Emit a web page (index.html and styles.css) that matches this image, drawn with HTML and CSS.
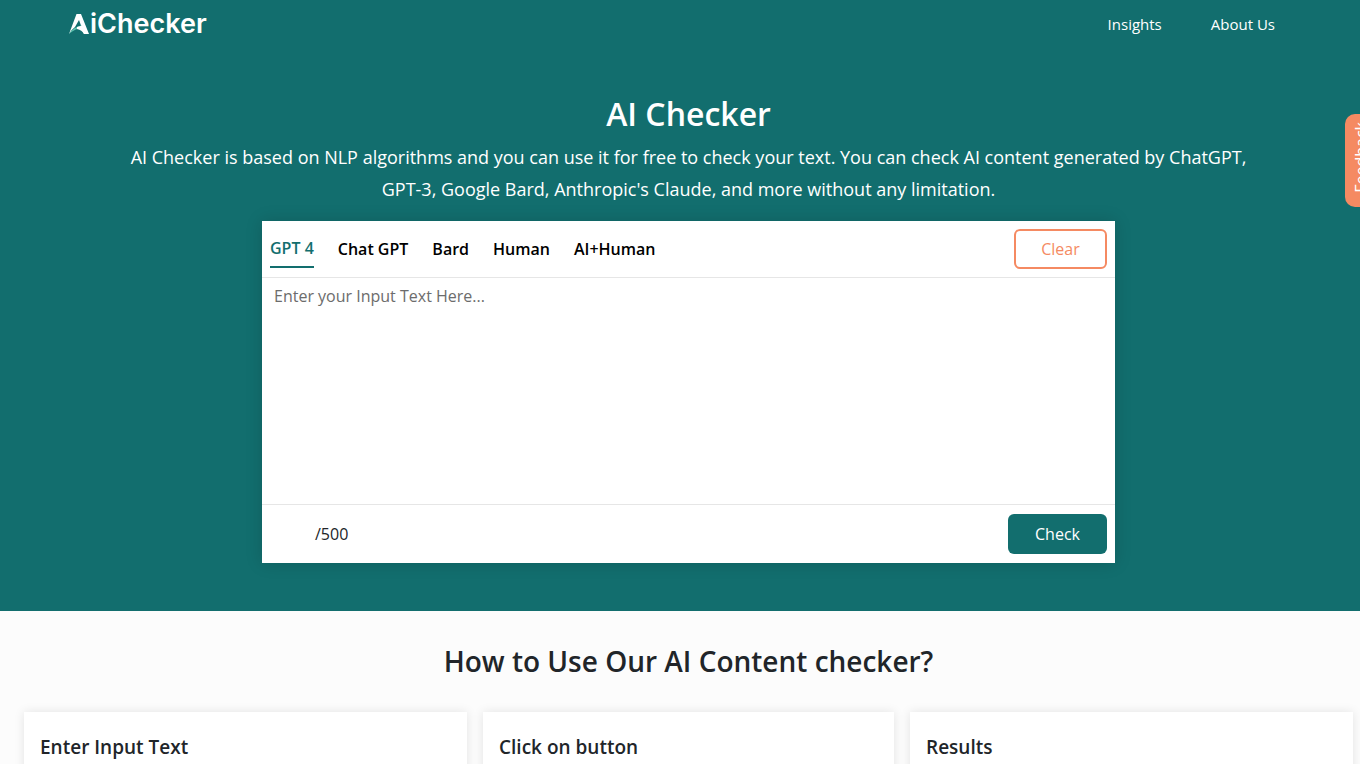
FILE: index.html
```html
<!DOCTYPE html>
<html lang="en">
<head>
<meta charset="utf-8">
<meta name="viewport" content="width=device-width, initial-scale=1">
<title>AI Checker</title>
<link rel="stylesheet" href="styles.css">
</head>
<body>
<div class="hero">
  <header class="topbar">
    <a class="logo" href="#" aria-label="AiChecker">
      <svg class="logo-mark" viewBox="0 0 21 22" aria-hidden="true">
        <path d="M7.500 1H12L20 21H15L10 7L6 14Q2 17 0 21z" fill="#fff"/>
        <path d="M0 21Q4 14 14 12L15 15Q6 15 0 21z" fill="#5fc4b0"/>
        <path d="M8 14Q12 13.500 14.500 11L19 21h-4Q13 17 8 16z" fill="#fff"/>
      </svg>
      <span class="logo-text">iChecker</span>
    </a>
    <nav class="nav">
      <a href="#">Insights</a>
      <a href="#">About Us</a>
    </nav>
  </header>
  <main class="intro">
    <h1>AI Checker</h1>
    <p>AI Checker is based on NLP algorithms and you can use it for free to check your text. You can check AI content generated by ChatGPT, GPT-3, Google Bard, Anthropic's Claude, and more without any limitation.</p>
    <form class="checker">
      <div class="checker-head">
        <div class="tabs">
          <button type="button" class="tab active">GPT 4</button>
          <button type="button" class="tab">Chat GPT</button>
          <button type="button" class="tab">Bard</button>
          <button type="button" class="tab">Human</button>
          <button type="button" class="tab">AI+Human</button>
        </div>
        <button type="reset" class="btn btn-clear">Clear</button>
      </div>
      <textarea class="input" aria-label="Input text" placeholder="Enter your Input Text Here..."></textarea>
      <div class="checker-foot">
        <span class="count">/500</span>
        <button type="button" class="btn btn-check">Check</button>
      </div>
    </form>
  </main>
</div>
<button type="button" class="feedback"><span>Feedback</span></button>
<section class="steps">
  <h2>How to Use Our AI Content checker?</h2>
  <div class="cards">
    <article class="card"><h3>Enter Input Text</h3></article>
    <article class="card"><h3>Click on button</h3></article>
    <article class="card"><h3>Results</h3></article>
  </div>
</section>
</body>
</html>
```
FILE: styles.css
```css
* { box-sizing: border-box; }
html { scrollbar-width: none; }
body {
  margin: 0;
  background: #fcfcfc;
  color: #212529;
  font: 16px/24px "Open Sans", sans-serif;
}
h1, h2, h3, p { margin: 0; }
button, textarea { font: inherit; }
button { cursor: pointer; }

.hero { background: #126e6e; padding-bottom: 48px; }
.topbar {
  display: flex;
  align-items: center;
  justify-content: space-between;
  height: 48px;
  padding: 0 85px 0 69px;
}
.logo { display: flex; align-items: center; color: #fff; text-decoration: none; }
.logo-mark { width: 21px; height: 22px; }
.logo-text { font: 600 27px/32px Inter, sans-serif; }
.nav { display: flex; gap: 49px; }
.nav a { color: #fff; font-size: 15px; text-decoration: none; }

.intro {
  padding: 46px 0 0 17px;
  color: #fff;
  text-align: center;
}
.intro h1 { font-size: 32px; line-height: 40px; font-weight: 600; }
.intro p { max-width: 1144px; margin: 7px auto 16px; font-size: 18px; line-height: 32px; }

.checker {
  width: 64%;
  max-width: 853px;
  margin: 0 auto;
  background: #fff;
  color: #212529;
  box-shadow: 0 0 16px rgba(0, 0, 0, .15);
}
.checker-head {
  display: flex;
  align-items: center;
  justify-content: space-between;
  padding: 8px;
  border-bottom: 1px solid #e6e6e6;
}
.tabs { display: flex; align-items: center; gap: 24px; }
.tab { padding: 0; border: 0; background: none; color: #000; font-weight: 600; }
.tab.active { padding: 6px 0; border-bottom: 2px solid #126e6e; color: #126e6e; }
.btn { height: 40px; border-radius: 6px; }
.btn-clear { width: 93px; border: 2px solid #f58a62; background: #fff; color: #f58a62; }
.btn-check { width: 99px; border: 0; background: #126e6e; color: #fff; }
.input {
  display: block;
  width: 100%;
  height: 226px;
  padding: 6px 12px;
  border: 0;
  outline: 0;
  resize: none;
}
.input::placeholder { color: #6c6c6c; }
.checker-foot {
  display: flex;
  align-items: center;
  justify-content: space-between;
  padding: 9px 8px;
  border-top: 1px solid #e6e6e6;
}
.count { padding-left: 45px; }

.feedback {
  position: fixed;
  top: 114px;
  right: -17px;
  width: 32px;
  height: 93px;
  padding: 0;
  border: 0;
  border-radius: 10px 0 0 10px;
  background: #f58a62;
  color: #fff;
}
.feedback span { writing-mode: vertical-rl; transform: rotate(180deg); }

.steps { padding: 32px 7px 24px 24px; }
.steps h2 { font-size: 28px; line-height: 36px; font-weight: 600; text-align: center; }
.cards { display: grid; grid-template-columns: 443fr 411fr 443fr; gap: 16px; margin-top: 33px; }
.card { min-height: 160px; padding: 23px 16px; background: #fff; box-shadow: 0 0 10px rgba(0, 0, 0, .1); }
.card h3 { font-size: 19px; line-height: 24px; font-weight: 600; }
```
